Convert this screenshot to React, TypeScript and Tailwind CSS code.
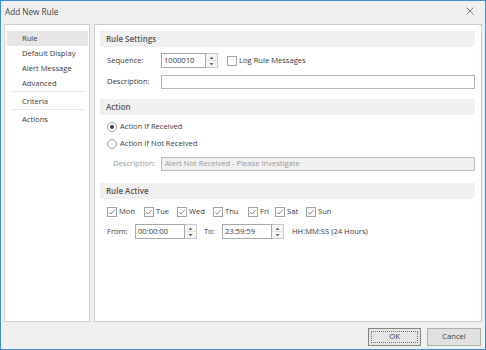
import React from "react";

function Spin({ w, value }: { w: string; value: string }) {
  return (
    <div className="flex h-[15px]">
      <div className={`${w} border border-[#a9a9a9] bg-white pl-[2px] leading-[13px] text-[#3a3a3a]`}>{value}</div>
      <div className="flex w-[12px] flex-col border border-l-0 border-[#c8c8c8] bg-[#f7f7f7]">
        <div className="flex flex-1 items-center justify-center border-b border-[#e2e2e2]">
          <svg width="5" height="3" viewBox="0 0 5 3"><path d="M0.5 3 L2.5 0.5 L4.5 3 Z" fill="#6a6a6a" /></svg>
        </div>
        <div className="flex flex-1 items-center justify-center">
          <svg width="5" height="3" viewBox="0 0 5 3"><path d="M0.5 0 L2.5 2.5 L4.5 0 Z" fill="#6a6a6a" /></svg>
        </div>
      </div>
    </div>
  );
}

function Check({ checked, label }: { checked: boolean; label: string }) {
  return (
    <div className="flex items-center">
      <div className="flex h-[10px] w-[10px] items-center justify-center border border-[#a3a3a3] bg-white">
        {checked && (
          <svg width="8" height="8" viewBox="0 0 8 8">
            <path d="M1.2 4.3 L3 6 L6.8 1.8" fill="none" stroke="#6a6a6a" strokeWidth="0.8" />
          </svg>
        )}
      </div>
      <span className="ml-[2px] text-[#3a3a3a]">{label}</span>
    </div>
  );
}

function Radio({ checked, label }: { checked: boolean; label: string }) {
  return (
    <div className="flex h-[12px] items-center">
      <div className="flex h-[10px] w-[10px] items-center justify-center rounded-full border border-[#999] bg-white">
        {checked && <div className="h-[4px] w-[4px] rounded-full bg-[#3a3a3a]" />}
      </div>
      <span className="ml-[3px] text-[#3a3a3a]">{label}</span>
    </div>
  );
}

function Header({ title }: { title: string }) {
  return (
    <div className="flex h-[16px] items-center bg-[#f0f0f0] pl-[6px] text-[8px] font-semibold text-[#555]">
      {title}
    </div>
  );
}

function NavItem({ label, selected }: { label: string; selected?: boolean }) {
  return (
    <div className={`flex h-[15px] items-center pl-[15px] text-[#3a3a3a] ${selected ? "bg-[#e6e6e6]" : ""}`}>{label}</div>
  );
}

export default function App() {
  return (
    <div className="flex h-[350px] w-[486px] flex-col border border-[#3c8fdb] bg-[#f0f0f0] font-['Open_Sans',sans-serif] text-[7.6px] leading-none text-[#3a3a3a]">
      <div className="relative flex h-[23px] items-center pl-[4px] text-[8.2px] text-[#444]">
        Add New Rule
        <svg className="absolute left-[465px] top-[6px]" width="8" height="8" viewBox="0 0 8 8">
          <path d="M0.5 0.5 L7.5 7.5 M7.5 0.5 L0.5 7.5" stroke="#666" strokeWidth="0.8" />
        </svg>
      </div>
      <div className="flex h-[298px] gap-[4px] pl-[3px] pr-[3px]">
        <div className="w-[86px] border border-[#cfcfcf] bg-white pl-[2px] pr-[1px] pt-[6px]">
          <NavItem label="Rule" selected />
          <NavItem label="Default Display" />
          <NavItem label="Alert Message" />
          <NavItem label="Advanced" />
          <div className="mx-[4px] mb-[2px] h-px bg-[#e3e3e3]" />
          <NavItem label="Criteria" />
          <div className="mx-[4px] mb-[2px] h-px bg-[#e3e3e3]" />
          <NavItem label="Actions" />
        </div>
        <div className="flex-1 border border-[#cbcbcb] bg-white pl-[5px] pr-[6px] pt-[6px]">
          <Header title="Rule Settings" />
          <div className="mt-[6px] flex h-[15px] items-center pl-[7px]">
            <span className="w-[54px]">Sequence:</span>
            <Spin w="w-[45px]" value="1000010" />
            <div className="ml-[9px]">
              <Check checked={false} label="Log Rule Messages" />
            </div>
          </div>
          <div className="mt-[7px] flex h-[14px] items-center pl-[7px]">
            <span className="w-[54px]">Description:</span>
            <div className="h-[14px] flex-1 border border-[#b5b5b5] bg-white" />
          </div>
          <div className="mt-[10px]">
            <Header title="Action" />
          </div>
          <div className="mt-[6px] pl-[7px]">
            <Radio checked label="Action If Received" />
          </div>
          <div className="mt-[5px] pl-[7px]">
            <Radio checked={false} label="Action If Not Received" />
          </div>
          <div className="mt-[7px] flex h-[14px] items-center pl-[13px]">
            <span className="w-[48px] text-[#9a9a9a]">Description:</span>
            <div className="flex h-[14px] flex-1 items-center border border-[#bcbcbc] bg-[#f0f0f0] pl-[3px] text-[#9a9a9a]">
              Alert Not Received - Please Investigate
            </div>
          </div>
          <div className="mt-[12px]">
            <Header title="Rule Active" />
          </div>
          <div className="mt-[7px] flex h-[12px] items-center pl-[7px]">
            <div className="w-[37px]"><Check checked label="Mon" /></div>
            <div className="w-[33px]"><Check checked label="Tue" /></div>
            <div className="w-[36px]"><Check checked label="Wed" /></div>
            <div className="w-[35px]"><Check checked label="Thu" /></div>
            <div className="w-[27px]"><Check checked label="Fri" /></div>
            <div className="w-[31px]"><Check checked label="Sat" /></div>
            <div><Check checked label="Sun" /></div>
          </div>
          <div className="mt-[6px] flex h-[15px] items-center pl-[7px]">
            <span className="w-[28px]">From:</span>
            <Spin w="w-[50px]" value="00:00:00" />
            <span className="ml-[7px] w-[18px]">To:</span>
            <Spin w="w-[50px]" value="23:59:59" />
            <span className="ml-[8px]">HH:MM:SS (24 Hours)</span>
          </div>
        </div>
      </div>
      <div className="flex justify-end gap-[6px] pr-[4px] pt-[6px]">
        <div className="flex h-[18px] w-[53px] items-center justify-center border border-[#858585] bg-[#e5e5e5] p-[2px]">
          <div className="flex h-full w-full items-center justify-center border border-dotted border-[#777]">OK</div>
        </div>
        <div className="flex h-[18px] w-[54px] items-center justify-center border border-[#adadad] bg-[#e1e1e1]">Cancel</div>
      </div>
    </div>
  );
}
